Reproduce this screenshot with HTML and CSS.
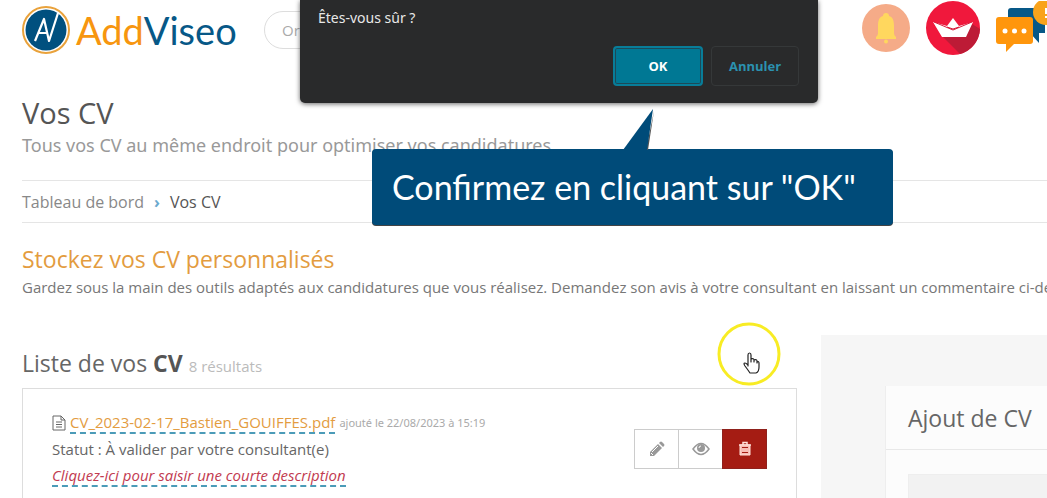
FILE: index.html
```html
<!DOCTYPE html>
<html lang="fr">
    <head>
        <meta charset="utf-8">
        <meta name="viewport" content="width=device-width, initial-scale=1">
        <title>Vos CV - AddViseo</title>
        <link rel="stylesheet" href="styles.css">
    </head>

    <body>
        <header class="topbar">
            <a class="logo" href="#">
                <svg class="logo-mark" viewBox="0 0 48 48" aria-hidden="true">
                    <circle cx="24" cy="24" r="23" fill="#fff" stroke="#e9a23b" stroke-width="2"/>
                    <circle cx="24" cy="24" r="20.500" fill="#00507f"/>
                    <path d="M13 35 22 13 27 35 36 7M16 27H26" fill="none" stroke="#fff" stroke-width="2.200" stroke-linejoin="round"/>
                </svg>
                <span class="logo-text"><span class="logo-add">Add</span>Viseo</span>
            </a>
            <input class="search" type="text" placeholder="Or" aria-label="Rechercher">
            <nav class="shortcuts">
                <a href="#" aria-label="Notifications">
                    <svg width="48" height="48" viewBox="0 0 48 48">
                        <circle cx="24" cy="24" r="24" fill="#f5ab88"/>
                        <path d="M24 9c-2 0-3 1-3 3-4 1-5 5-5 10v7c0 2-1 3-2 4v2h20v-2c-1-1-2-2-2-4v-7c0-5-1-9-5-10 0-2-1-3-3-3z" fill="#ffd75e"/>
                        <circle cx="24" cy="37.500" r="2" fill="#ffd75e"/>
                    </svg>
                </a>
                <a href="#" aria-label="Parcours">
                    <svg width="54" height="54" viewBox="0 0 54 54">
                        <circle cx="27" cy="27" r="27" fill="#f0183c"/>
                        <path d="M17 36 34 53A27 27 0 0 0 54 28L46 23z" fill="#bd1b36"/>
                        <path d="M7 21 21 25 27 17 33 25 47 21 40 36H16z" fill="#fff"/>
                        <path d="M8 21 27 29 46 21M21 26 27 28 33 26" fill="none" stroke="#d91c3c"/>
                    </svg>
                </a>
                <a href="#" aria-label="Messages">
                    <svg width="51" height="54" viewBox="0 0 51 54">
                        <path d="M15 7h31q3 0 3 3v22h-6v10l-8-9H12V10q0-3 3-3z" fill="#075887"/>
                        <rect y="16" width="37" height="27" rx="3" fill="#ff960c"/>
                        <path d="M10 42h9l-9 9z" fill="#ff960c"/>
                        <g fill="#fff"><circle cx="9" cy="30" r="2.500"/><circle cx="18.500" cy="30" r="2.500"/><circle cx="28" cy="30" r="2.500"/></g>
                        <circle cx="50" cy="11" r="13" fill="#f9a31b"/>
                        <path d="M50 7v6M50 15v2" stroke="#fff" stroke-width="2"/>
                    </svg>
                </a>
            </nav>
        </header>

        <main>
            <h1>Vos CV</h1>
            <p class="subtitle">Tous vos CV au même endroit pour optimiser vos candidatures</p>

            <nav class="breadcrumb">
                <a href="#">Tableau de bord</a>
                <span class="separator">›</span>
                <span>Vos CV</span>
            </nav>

            <section class="intro">
                <h2>Stockez vos CV personnalisés</h2>
                <p>Gardez sous la main des outils adaptés aux candidatures que vous réalisez. Demandez son avis à votre consultant en laissant un commentaire ci-dessous.</p>
            </section>

            <div class="columns">
                <section class="list">
                    <h2>Liste de vos <strong>CV</strong> <small>8 résultats</small></h2>
                    <article class="cv">
                        <div class="cv-text">
                            <div class="cv-file">
                                <svg width="14" height="16" viewBox="0 0 14 16" fill="none" stroke="#666">
                                    <path d="M1 1h8l4 4v10H1zM9 1v4h4M4 7h6M4 9.500h6M4 12h6"/>
                                </svg>
                                <a class="cv-name" href="#">CV_2023-02-17_Bastien_GOUIFFES.pdf</a>
                                <span class="cv-date">ajouté le 22/08/2023 à 15:19</span>
                            </div>
                            <div>Statut : À valider par votre consultant(e)</div>
                            <div><a class="cv-description" href="#">Cliquez-ici pour saisir une courte description</a></div>
                        </div>
                        <div class="cv-actions">
                            <button type="button" aria-label="Modifier">
                                <svg width="16" height="16" viewBox="0 0 16 16" fill="#999">
                                    <path d="M1 15v-4L9 3l4 4-8 8zM10 2l1-1q1-1 2 0l2 2q1 1 0 2l-1 1z"/>
                                    <path d="M3 11 9 5M2 12l2 2" stroke="#fff"/>
                                </svg>
                            </button>
                            <button type="button" aria-label="Voir">
                                <svg width="18" height="14" viewBox="0 0 18 14">
                                    <path d="M1 7q8-11 16 0-8 11-16 0z" fill="none" stroke="#999" stroke-width="1.500"/>
                                    <circle cx="9" cy="6" r="4" fill="#999"/>
                                    <path d="M7 6q0-2 2-2" fill="none" stroke="#fff"/>
                                </svg>
                            </button>
                            <button class="delete" type="button" aria-label="Supprimer">
                                <svg width="14" height="16" viewBox="0 0 14 16">
                                    <path d="M1 4h12M5 4V1.500h4V4" fill="none" stroke="#ffe1da" stroke-width="1.500"/>
                                    <path d="M2 4h10v10H2z" fill="#f7bdb5" stroke="#ffe1da"/>
                                    <path d="M4 6.500h6M4 11.500h6" stroke="#a51c13"/>
                                </svg>
                            </button>
                        </div>
                    </article>
                </section>

                <aside class="side">
                    <div class="card">
                        <h2>Ajout de CV</h2>
                        <div class="card-body">
                            <div class="dropzone"></div>
                        </div>
                    </div>
                </aside>
            </div>
        </main>

        <div class="dialog" role="dialog" aria-labelledby="dialog-text">
            <p id="dialog-text">Êtes-vous sûr ?</p>
            <div class="dialog-buttons">
                <button class="ok" type="button">OK</button>
                <button class="cancel" type="button">Annuler</button>
            </div>
        </div>

        <div class="callout">
            Confirmez en cliquant sur "OK"
            <svg class="callout-tail" width="32" height="41" viewBox="0 0 32 41">
                <path d="M31 2 25 41h-2z" fill="#555"/>
                <path d="M30 0 24 41H0z" fill="#004b79"/>
            </svg>
        </div>

        <svg class="pointer" width="64" height="64" viewBox="0 0 64 64" aria-hidden="true">
            <circle cx="32" cy="32" r="30" fill="none" stroke="#f8ec24" stroke-width="3"/>
            <path d="M31 44V33q0-2 1.500-2t1.500 2v7-3q3-1 3 1v2-2q3-1 3 1v2-1q2-1 2 1v4q0 5-3 6h-6q-2-3-5-7-2-3 0-3 1 0 3 2z" fill="#fff" stroke="#222" stroke-width="1.200" stroke-linejoin="round"/>
        </svg>
    </body>
</html>
```
FILE: styles.css
```css
/* base */
* {
    box-sizing: border-box;
}

body {
    position: relative;
    margin: 0;
    min-height: 100vh;
    overflow: hidden;
    font-family: "Open Sans", "Noto Sans", sans-serif;
    font-size: 15px;
    line-height: 26px;
    background: #fff;
    color: #666;
}

h1, h2, p {
    margin: 0;
    font-weight: normal;
}

a {
    color: inherit;
    text-decoration: none;
}

button {
    font-family: inherit;
    cursor: pointer;
}

svg {
    display: block;
}

/* header */
.topbar {
    display: flex;
    align-items: center;
    height: 60px;
    padding-left: 22px;
}

.logo {
    display: flex;
    flex-shrink: 0;
    align-items: center;
    gap: 6px;
    width: 242px;
}

.logo-mark {
    flex-shrink: 0;
    width: 48px;
    height: 48px;
}

.logo-text {
    font-family: Lato, sans-serif;
    font-size: 38px;
    line-height: 60px;
    color: #075887;
}

.logo-add {
    color: #f7960f;
}

.search {
    width: 240px;
    height: 38px;
    padding: 0 17px;
    border: 1px solid #ddd;
    border-radius: 19px;
    font-family: inherit;
    font-size: 15px;
    background: #fff;
}

.search::placeholder {
    color: #aaa;
}

.shortcuts {
    display: flex;
    align-items: center;
    gap: 16px;
    height: 56px;
    margin-left: auto;
    align-self: flex-start;
}

/* content */
main {
    padding-left: 22px;
}

h1 {
    padding-top: 33px;
    font-size: 29px;
    line-height: 40px;
    color: #555;
}

.subtitle {
    font-family: "Noto Sans", sans-serif;
    font-size: 18px;
    line-height: 24px;
    color: #999;
}

.breadcrumb {
    display: flex;
    gap: 10px;
    margin-top: 23px;
    padding: 8px 0 7px;
    border-top: 1px solid #e5e5e5;
    border-bottom: 1px solid #e5e5e5;
    font-size: 16px;
    color: #555;
}

.breadcrumb a {
    color: #888;
}

.separator {
    color: #6ba9ce;
    font-weight: bold;
}

.intro {
    padding-top: 20px;
    white-space: nowrap;
}

h2 {
    font-size: 23px;
    line-height: 32px;
    color: #666;
}

.intro h2 {
    color: #e39c3f;
}

.intro p {
    font-size: 15px;
    line-height: 24px;
    color: #777;
}

.columns {
    display: grid;
    grid-template-columns: minmax(0, 1fr) 226px;
    gap: 24px;
    margin-top: 36px;
}

.list h2 {
    padding: 12px 0 6px;
}

.list strong {
    color: #555;
}

.list small {
    font-size: 15px;
    color: #bbb;
}

.cv {
    display: flex;
    align-items: center;
    justify-content: space-between;
    height: 122px;
    padding: 0 29px;
    border: 1px solid #ddd;
}

.cv-file {
    display: flex;
    align-items: center;
    gap: 4px;
}

.cv-name {
    border-bottom: 2px dashed #4b9bb8;
    line-height: 20px;
    color: #e39c3f;
}

.cv-date {
    font-family: "Noto Sans", sans-serif;
    font-size: 11px;
    color: #aaa;
}

.cv-description {
    border-bottom: 2px dashed #4b9bb8;
    font-style: italic;
    color: #c23a50;
}

.cv-actions {
    display: flex;
}

.cv-actions button {
    display: flex;
    align-items: center;
    justify-content: center;
    width: 45px;
    height: 40px;
    margin-left: -1px;
    padding: 0;
    border: 1px solid #ccc;
    background: #fff;
}

.cv-actions .delete {
    border-color: #8f211c;
    background: #a51c13;
}

/* right column */
.side {
    padding: 51px 0 0 64px;
    background: #f6f6f6;
}

.card {
    border-left: 1px solid #eee;
    background: #fcfcfc;
}

.card h2 {
    padding: 16px 0 15px 22px;
    border-bottom: 1px solid #e8e8e8;
    white-space: nowrap;
}

.card-body {
    padding: 24px 0 0 22px;
}

.dropzone {
    height: 60px;
    border: 1px solid #eee;
    border-right: 0;
    background: #f2f2f2;
}

/* confirmation */
.dialog {
    position: absolute;
    top: 0;
    left: 300px;
    width: 518px;
    padding: 6px 19px 17px 18px;
    border-radius: 0 0 5px 5px;
    background: #292a2b;
    box-shadow: 0 1px 5px rgba(0, 0, 0, 0.6);
    color: #e8e8e8;
}

.dialog p {
    font-family: "Noto Sans", sans-serif;
    font-size: 14px;
    line-height: 24px;
}

.dialog-buttons {
    display: flex;
    justify-content: flex-end;
    gap: 8px;
    margin-top: 16px;
}

.dialog button {
    width: 90px;
    height: 40px;
    border-radius: 4px;
    font-size: 13px;
    font-weight: bold;
}

.dialog .ok {
    border: 2px solid #087d99;
    background: #007894;
    box-shadow: inset 0 0 0 1px #1c4a58;
    color: #fff;
}

.dialog .cancel {
    width: 88px;
    border: 1px solid #353839;
    background: transparent;
    color: #2b91b0;
}

.callout {
    position: absolute;
    top: 149px;
    left: 372px;
    width: 521px;
    padding: 18px 20px;
    border-radius: 4px;
    background: #004b79;
    box-shadow: 0 1px 0 #444;
    font-family: Lato, sans-serif;
    font-size: 34px;
    line-height: 40px;
    white-space: nowrap;
    color: #fff;
}

.callout-tail {
    position: absolute;
    top: -40px;
    left: 251px;
}

.pointer {
    position: absolute;
    top: 322px;
    left: 717px;
}
```
